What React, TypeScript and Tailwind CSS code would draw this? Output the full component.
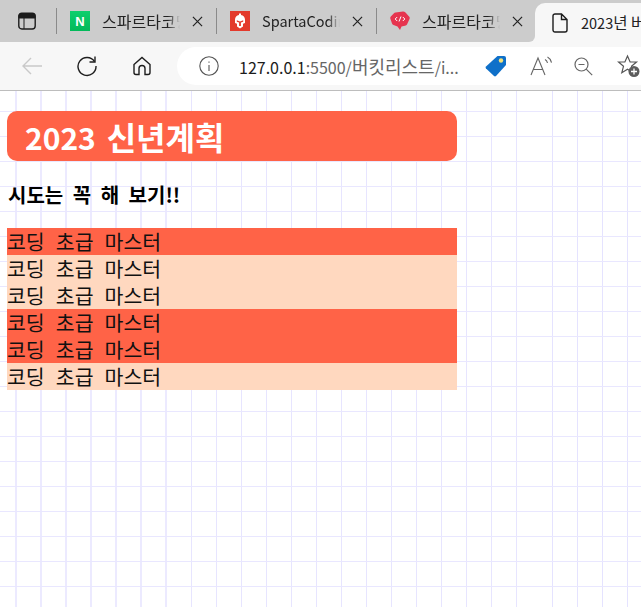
import React from "react";

const KR = "font-['Noto_Sans_CJK_KR','Noto_Sans',sans-serif]";

function CloseX() {
  return (
    <svg width="11" height="11" viewBox="0 0 12 12" className="shrink-0" fill="none" stroke="#222" strokeWidth="1.3">
      <path d="M1 1l10 10M11 1L1 11" />
    </svg>
  );
}

function Tab({ icon, title, size }: { icon: React.ReactNode; title: string; size: string }) {
  return (
    <div className="flex h-full w-[160px] shrink-0 items-center">
      <div className="h-[26px] w-px shrink-0 bg-[#8a8a8a]" />
      <div className="ml-[13px] flex h-5 w-5 shrink-0 items-center justify-center">{icon}</div>
      <div className={`ml-3 w-[78px] shrink-0 overflow-hidden whitespace-nowrap leading-5 text-[#222] [mask-image:linear-gradient(to_right,black_84%,transparent)] ${size}`}>
        {title}
      </div>
      <div className="ml-[12px]"><CloseX /></div>
    </div>
  );
}

const rows = [true, false, false, true, true, false];

const gridLines =
  "bg-[linear-gradient(to_bottom,transparent_20px,#e9e7ff_20px,#e9e7ff_21px,transparent_21px),repeating-linear-gradient(to_right,transparent_0,transparent_15px,#eceaff_15px,#eceaff_17px,transparent_17px,transparent_25px),repeating-linear-gradient(to_right,transparent_0,transparent_15px,#e7e5ff_15px,#e7e5ff_16px,transparent_16px,transparent_25px),repeating-linear-gradient(to_right,transparent_0,transparent_15px,#e5e3ff_15px,#e5e3ff_16px,transparent_16px,transparent_25px)] bg-[length:25px_25px,176px_100%,361px_100%,104px_100%] bg-[position:0_0,0_0,176px_0,537px_0] [background-repeat:repeat,no-repeat,no-repeat,no-repeat]";

export default function App() {
  return (
    <div className={`relative h-[607px] w-[641px] overflow-hidden bg-white ${KR}`}>
      {/* tab strip */}
      <div className="flex h-[42px] items-center bg-[#cccccc] pl-[18px]">
        <svg width="18" height="18" viewBox="0 0 18 18" fill="none" stroke="#1c1c1c" strokeWidth="1.4" className="mr-[20px] shrink-0">
          <rect x="0.8" y="1.2" width="16.4" height="15.8" rx="3" />
          <path d="M1 3.5Q1 1.5 3.5 1.5h11Q17 1.5 17 3.5V6H1zM6 6v11" fill="#1c1c1c" strokeWidth="1" />
        </svg>
        <Tab
          title="스파르타코딩클럽"
          size="text-[16px]"
          icon={
            <div className="flex h-5 w-5 items-center justify-center bg-gradient-to-b from-[#0ecf6d] to-[#03b95a]">
              <span className="font-['Liberation_Sans',sans-serif] text-[13px] font-bold leading-none text-white">N</span>
            </div>
          }
        />
        <Tab
          title="SpartaCoding"
          size="text-[14.5px]"
          icon={
            <svg width="20" height="20" viewBox="0 0 20 20">
              <rect width="20" height="20" fill="#e33a2c" />
              <path d="M9 2.500h2v1.600C13.300 4.500 15 6.300 15 8.800V12l-2 .8V15.500L10 17.500 7 15.500v-2.700L5 12V8.800C5 6.300 6.700 4.500 9 4.100z" fill="#fff" />
              <path d="M6.800 9.300L10 10.500l3.200-1.200v1.500l-2.300.8v3.400H9.100v-3.400l-2.300-.8z" fill="#e33a2c" />
            </svg>
          }
        />
        <Tab
          title="스파르타코딩"
          size="text-[16px]"
          icon={
            <svg width="20" height="21" viewBox="0 0 20 21">
              <path d="M5.500 1.500L13 0.500Q14.500 0.500 15.500 1.500L19.500 6Q20 7 19.500 8L17 13.500Q16.500 14.500 15 14.800L11.500 15.500L10 19L7.500 15.500L3.500 14Q2.500 13.500 2 12.500L0.300 7.500Q0 6.500 0.800 5.500L4 2.200Q4.500 1.700 5.500 1.500z" fill="#e6344f" />
              <path d="M7.200 6L5.200 8l2 2M12.800 6l2 2-2 2M11 5.500L9 10.500" fill="none" stroke="#fff" strokeWidth="1" />
            </svg>
          }
        />
        {/* active tab */}
        <div className="relative -ml-px mt-[3px] flex h-[39px] flex-1 items-center rounded-tl-[10px] bg-[#f7f7f7] pl-[17px]">
          <span className="absolute bottom-0 left-[-6px] h-[6px] w-[6px] bg-[#f7f7f7]">
            <span className="block h-full w-full rounded-br-[6px] bg-[#cccccc]" />
          </span>
          <svg width="16" height="20" viewBox="0 0 16 20" fill="none" stroke="#1c1c1c" strokeWidth="1.400" className="shrink-0">
            <path d="M3 1h6.500L15 6.500V17a2 2 0 0 1-2 2H3a2 2 0 0 1-2-2V3a2 2 0 0 1 2-2zM9.500 1v5.500H15" />
          </svg>
          <span className="ml-[13px] whitespace-nowrap text-[14.500px] leading-5 text-[#222]">
            2023<span className="text-[15.500px]">년 버킷리스트</span>
          </span>
        </div>
      </div>

      {/* toolbar */}
      <div className="flex h-[49px] items-center border-b border-[#bdbdbd] bg-[#f7f7f7] pl-[21px]">
        <svg width="22" height="20" viewBox="0 0 22 20" fill="none" stroke="#c9c9c9" strokeWidth="1.400" className="shrink-0">
          <path d="M21 10H2M10 2l-8 8 8 8" />
        </svg>
        <svg width="22" height="22" viewBox="0 0 22 22" fill="none" stroke="#1e1e1e" strokeWidth="1.400" className="ml-[33px] shrink-0">
          <path d="M18.500 6.500A9 9 0 1 0 20 11" />
          <path d="M19 1.500v5.500h-5.500" />
        </svg>
        <svg width="20" height="20" viewBox="0 0 20 20" fill="none" stroke="#1e1e1e" strokeWidth="1.400" className="ml-[34px] shrink-0">
          <path d="M2 8.500L10 1.500l8 7V16.500a2 2 0 0 1-2 2h-3v-6a3 3 0 0 0-6 0v6H4a2 2 0 0 1-2-2z" />
        </svg>
        {/* address pill */}
        <div className="ml-[25px] flex h-[38px] flex-1 items-center rounded-l-[19px] bg-white pl-[22px]">
          <svg width="20" height="20" viewBox="0 0 20 20" fill="none" stroke="#555" strokeWidth="1.100" className="shrink-0">
            <circle cx="10" cy="10" r="9.200" />
            <path d="M10 9v6M10 5.500v1.300" />
          </svg>
          <span className="ml-[20px] w-[233px] shrink-0 whitespace-nowrap text-[16px] leading-6 text-[#666]">
            <span className="text-[#1c1c1c]">127.0.0.1</span>:5500/<span className="text-[18px]">버킷리스트</span>/i...
          </span>
          <svg width="22" height="22" viewBox="0 0 22 22" className="ml-[13px] shrink-0">
            <path d="M12.500 1h6.500a2 2 0 0 1 2 2v7L11 21a1.500 1.500 0 0 1-2 0L1 13.500a1.500 1.500 0 0 1 0-2z" fill="#0f70c9" />
            <circle cx="16" cy="5.500" r="2.200" fill="#f4e27a" />
          </svg>
          <svg width="22" height="20" viewBox="0 0 22 20" fill="none" stroke="#666" strokeWidth="1.100" className="ml-[23px] shrink-0">
            <path d="M1 19L8 2l7 17M3.500 13.500h9" />
            <path d="M15 3.500q2 1 2.500 3.500M17.500 1q3 1.500 4 5.500" />
          </svg>
          <svg width="19" height="19" viewBox="0 0 19 19" fill="none" stroke="#666" strokeWidth="1.200" className="ml-[22px] shrink-0">
            <circle cx="7.500" cy="7.500" r="6.500" />
            <path d="M4.500 7.500h6M12.200 12.200l6 6" />
          </svg>
          <svg width="24" height="24" viewBox="0 0 24 24" className="ml-[24px] shrink-0">
            <path d="M10.500 2l2.600 6h6.400l-5 4.300 1.700 6.500-5.700-3.500-5.700 3.500 1.700-6.500L1.500 8h6.400z" fill="none" stroke="#555" strokeWidth="1.200" />
            <circle cx="17" cy="17.500" r="5.500" fill="#5c5c5c" />
            <path d="M17 14.500v6M14 17.500h6" stroke="#fff" strokeWidth="1.300" />
          </svg>
        </div>
      </div>

      {/* page */}
      <div className={`h-[516px] px-[7px] pt-[20px] ${gridLines}`}>
        <div className="flex h-[50px] w-[450px] items-center rounded-[10px] bg-[#ff6347] pl-[18px] text-[30px] font-bold text-white [word-spacing:4px]">
          <span>2023 <span className="text-[32px]">신년계획</span></span>
        </div>
        <h2 className="mt-[20px] pl-px text-[20px] font-bold leading-7 text-black [word-spacing:5px]">시도는 꼭 해 보기!!</h2>
        <ul className="mt-[19px] w-[450px]">
          {rows.map((hot, i) => (
            <li key={i} className={`h-[27px] text-[20.500px] leading-[27px] text-[#111] [word-spacing:6.500px] ${hot ? "bg-[#ff6347]" : "bg-[#ffd8bf]"}`}>
              코딩 초급 마스터
            </li>
          ))}
        </ul>
      </div>
    </div>
  );
}
